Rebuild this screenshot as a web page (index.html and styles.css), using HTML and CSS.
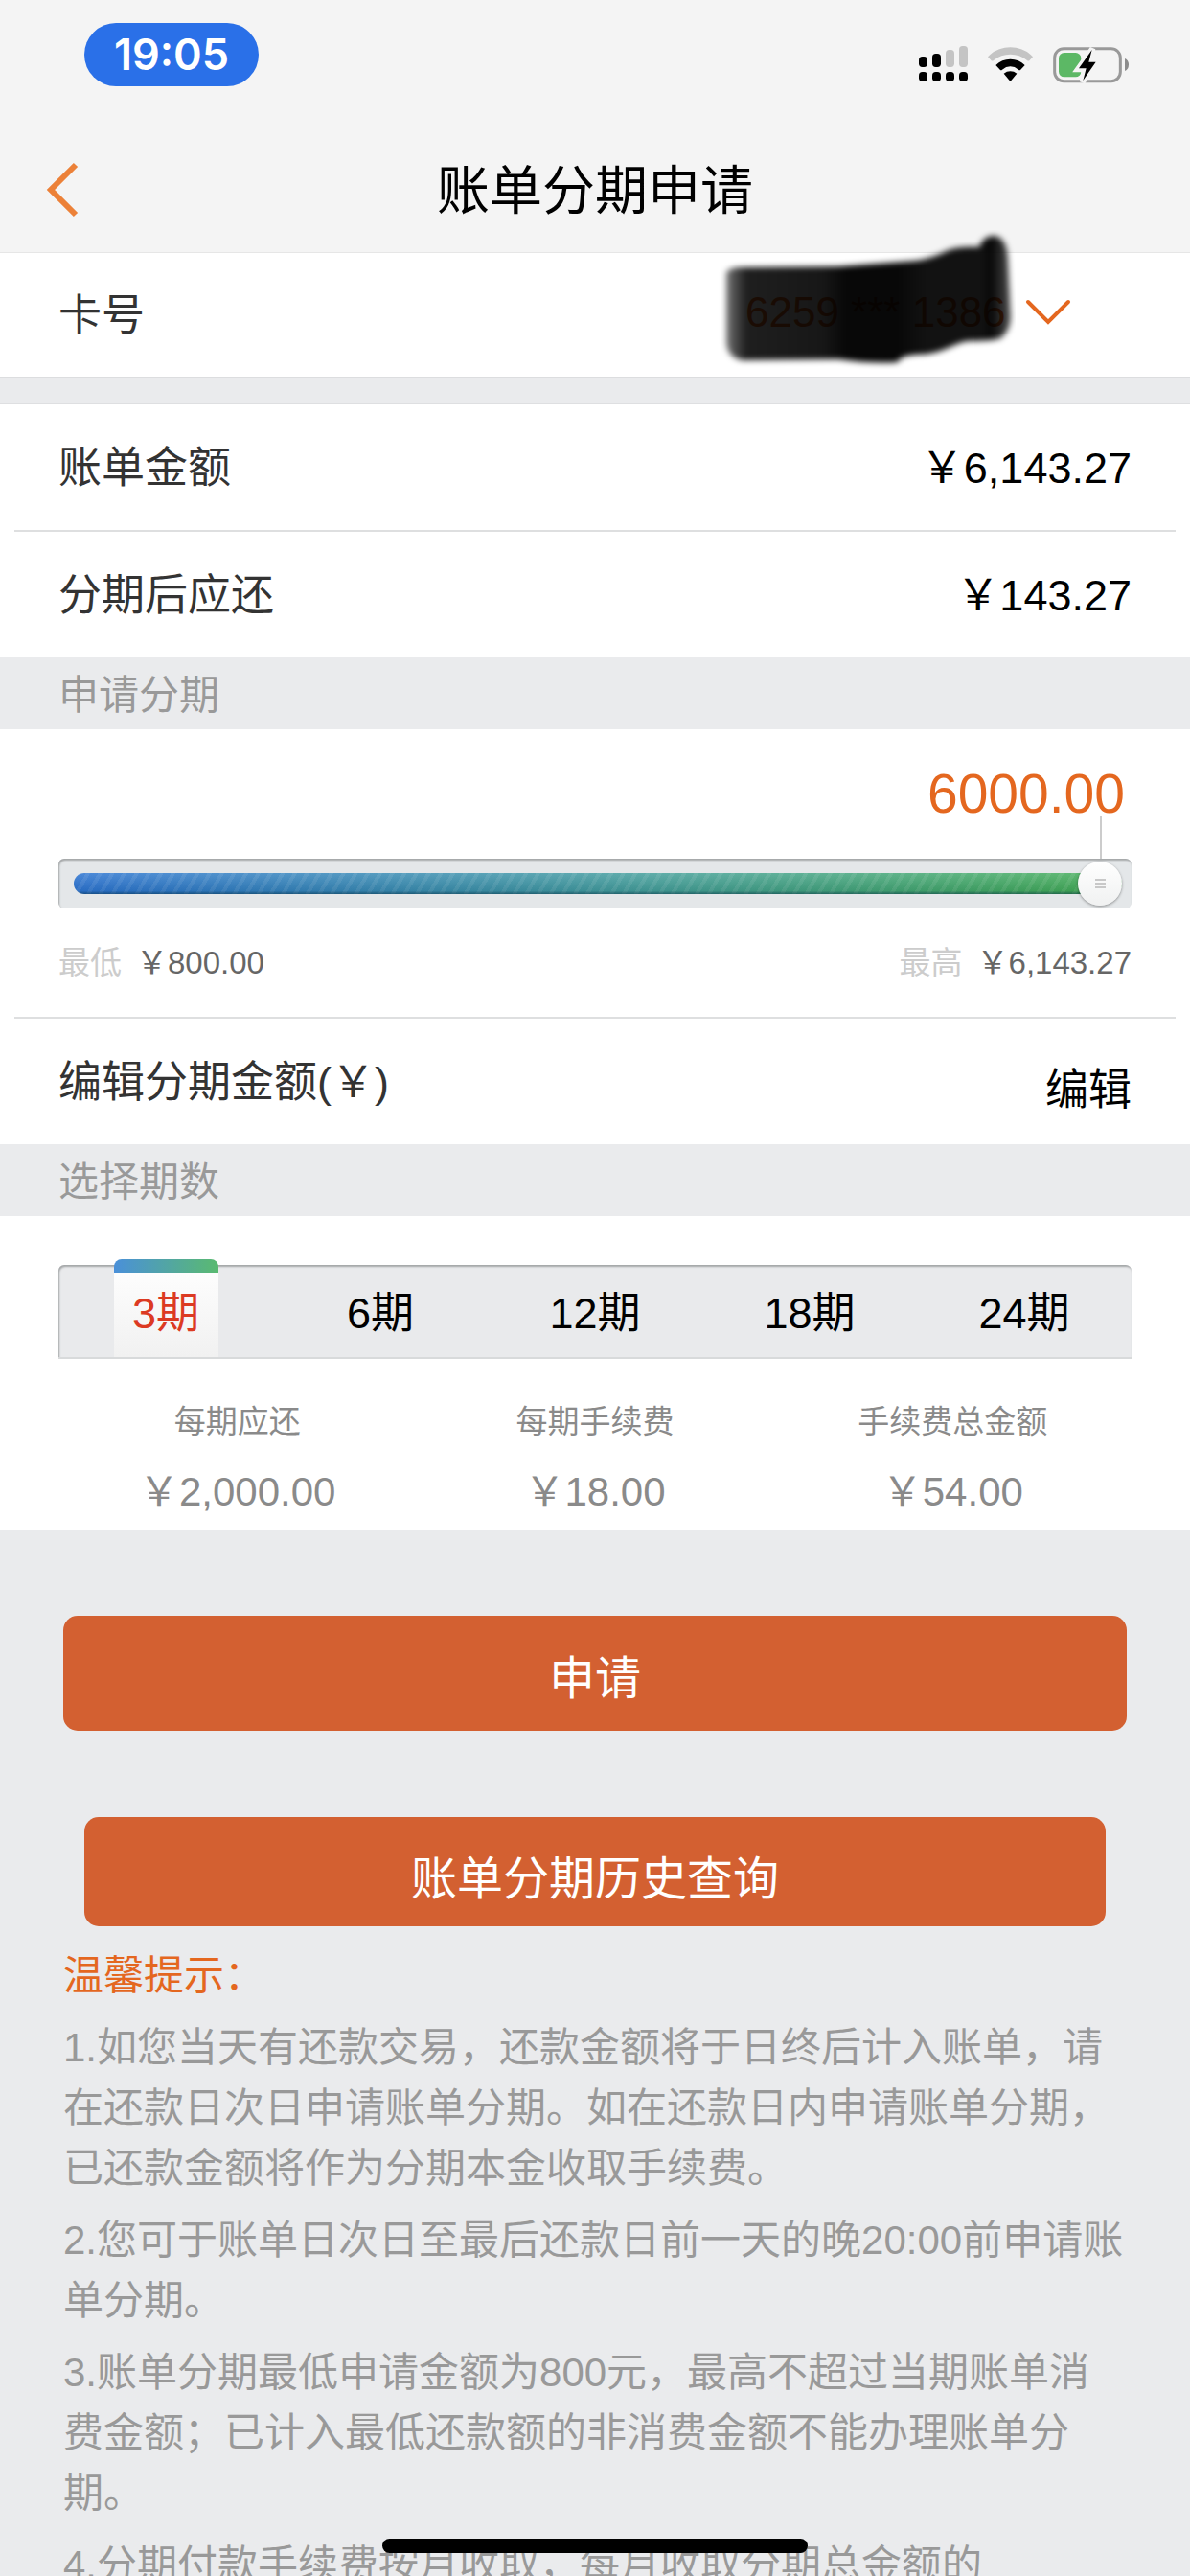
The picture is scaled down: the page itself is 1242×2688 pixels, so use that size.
FILE: index.html
```html
<!DOCTYPE html>
<html lang="zh-CN">
<head>
    <meta charset="UTF-8">
    <meta name="viewport" content="width=device-width, initial-scale=1.0">
    <title>账单分期申请</title>
    <link rel="stylesheet" href="styles.css">
</head>
<body>
    <header class="top">
        <div class="status-bar">
            <span class="time">19:05</span>
            <div class="status-icons">
                <svg width="51" height="37" viewBox="0 0 153 111" aria-hidden="true">
                    <rect x="0" y="33" width="27" height="33" rx="11"/>
                    <rect x="42" y="24" width="27" height="42" rx="11"/>
                    <rect x="84" y="12" width="27" height="54" rx="11" fill="#c4c4c4"/>
                    <rect x="126" y="0" width="27" height="66" rx="11" fill="#c4c4c4"/>
                    <rect x="0" y="81" width="27" height="30" rx="11"/>
                    <rect x="42" y="81" width="27" height="30" rx="11"/>
                    <rect x="84" y="81" width="27" height="30" rx="11"/>
                    <rect x="126" y="81" width="27" height="30" rx="11"/>
                </svg>
                <svg width="47" height="37" viewBox="0 0 141 111" aria-hidden="true">
                    <path d="M0 34Q3 31 7 27Q34 4 70.500 4Q107 4 134 27Q138 31 141 34L130 46Q126 48 123 45Q100 26 70.500 26Q41 26 18 45Q15 48 11 46Z" fill="#c4c4c4"/>
                    <path d="M25 60Q44 41 70.500 41Q97 41 116 60L102 75Q99 77 96 74Q84 64 70.500 64Q57 64 45 74Q42 77 39 75Z"/>
                    <path d="M50 86Q59 79 70.500 79Q82 79 91 86L70.500 111Z"/>
                </svg>
                <svg width="79" height="39" viewBox="0 0 237 117" aria-hidden="true">
                    <rect x="5" y="8" width="206" height="102" rx="29" fill="none" stroke="#999" stroke-width="9"/>
                    <path d="M225 39Q237 44 237 58Q237 73 225 78Z" fill="#8c8c8c"/>
                    <rect x="18" y="21" width="70" height="76" rx="17" fill="#5cb865"/>
                    <path d="M124 8L78 73H100L92 113L138 48H116Z" stroke="#f4f4f4" stroke-width="18"/>
                    <path d="M122 12L81 70H104L94 108L134 50H112Z"/>
                </svg>
            </div>
        </div>
        <div class="nav-bar">
            <button class="back" type="button" aria-label="返回">
                <svg width="34" height="58" viewBox="0 0 34 58" fill="none" stroke="#ec8138" stroke-width="6" aria-hidden="true">
                    <path d="M31 3L5 29L31 55"/>
                </svg>
            </button>
            <h1>账单分期申请</h1>
        </div>
    </header>

    <main class="content">
        <div class="row card-row">
            <label for="card">卡号</label>
            <div class="card-select">
                <select id="card">
                    <option>6259 *** 1386</option>
                </select>
                <svg class="arrow" width="48" height="28" viewBox="0 0 48 28" fill="none" stroke="#e4671f" stroke-width="4" stroke-linecap="round" aria-hidden="true">
                    <path d="M3 3L24 24L45 3"/>
                </svg>
                <!-- marker stroke over the card number -->
                <svg class="marker" width="310" height="150" viewBox="0 0 310 150" aria-hidden="true">
                    <defs>
                        <filter id="soft" x="-10%" y="-10%" width="120%" height="120%">
                            <feGaussianBlur stdDeviation="3"/>
                        </filter>
                        <linearGradient id="ink">
                            <stop offset="0" stop-color="#000" stop-opacity=".55"/>
                            <stop offset=".07" stop-color="#000" stop-opacity=".88"/>
                            <stop offset=".34" stop-color="#000" stop-opacity=".91"/>
                            <stop offset=".42" stop-color="#000" stop-opacity=".97"/>
                            <stop offset=".6" stop-color="#000" stop-opacity=".97"/>
                            <stop offset=".7" stop-color="#000" stop-opacity=".93"/>
                            <stop offset=".9" stop-color="#000" stop-opacity=".93"/>
                            <stop offset=".93" stop-color="#000" stop-opacity=".97"/>
                            <stop offset="1" stop-color="#000" stop-opacity=".7"/>
                        </linearGradient>
                    </defs>
                    <path filter="url(#soft)" fill="url(#ink)" d="M8 44Q12 39 24 39L125 38L205 32Q222 30 240 21Q252 17 272 18Q276 6 288 6Q300 8 302 28L305 92Q304 106 294 113Q286 116 260 116C244 118 235 130 205 130Q190 131 187 138Q160 140 125 135L24 136Q9 132 8 118Z"/>
                </svg>
            </div>
        </div>

        <div class="spacer"></div>

        <div class="row">
            <span>账单金额</span>
            <span class="amount">￥6,143.27</span>
        </div>
        <hr>
        <div class="row">
            <span>分期后应还</span>
            <span class="amount">￥143.27</span>
        </div>

        <h2>申请分期</h2>
        <div class="slider-box">
            <output class="current" for="range">6000.00</output>
            <div class="pointer"></div>
            <input type="range" id="range" min="800" max="6000" value="6000" aria-label="申请分期金额">
            <div class="limits">
                <div class="limit"><span>最低</span>￥800.00</div>
                <div class="limit"><span>最高</span>￥6,143.27</div>
            </div>
        </div>
        <hr>
        <div class="row">
            <span>编辑分期金额(￥)</span>
            <button class="edit" type="button">编辑</button>
        </div>

        <h2>选择期数</h2>
        <div class="periods">
            <div class="tabs">
                <input type="radio" name="period" id="p3" checked><label for="p3">3期</label>
                <input type="radio" name="period" id="p6"><label for="p6">6期</label>
                <input type="radio" name="period" id="p12"><label for="p12">12期</label>
                <input type="radio" name="period" id="p18"><label for="p18">18期</label>
                <input type="radio" name="period" id="p24"><label for="p24">24期</label>
            </div>
            <dl class="fees">
                <div><dt>每期应还</dt><dd>￥2,000.00</dd></div>
                <div><dt>每期手续费</dt><dd>￥18.00</dd></div>
                <div><dt>手续费总金额</dt><dd>￥54.00</dd></div>
            </dl>
        </div>

        <div class="actions">
            <button class="btn" type="button">申请</button>
            <button class="btn history" type="button">账单分期历史查询</button>
        </div>

        <div class="tips">
            <h3>温馨提示：</h3>
            <p>1.如您当天有还款交易，还款金额将于日终后计入账单，请在还款日次日申请账单分期。如在还款日内申请账单分期，已还款金额将作为分期本金收取手续费。</p>
            <p>2.您可于账单日次日至最后还款日前一天的晚20:00前申请账单分期。</p>
            <p>3.账单分期最低申请金额为800元，最高不超过当期账单消费金额；已计入最低还款额的非消费金额不能办理账单分期。</p>
            <p>4.分期付款手续费按月收取，每月收取分期总金额的</p>
        </div>
    </main>
    <div class="home-bar"></div>
</body>
</html>
```
FILE: styles.css
```css
* {
    box-sizing: border-box;
}
body {
    margin: 0;
    height: 100vh;
    overflow: hidden;
    background-color: #eaebed;
    color: #000;
    font-family: "Liberation Sans", "Noto Sans CJK SC", sans-serif;
    font-size: 45px;
}
button,
select {
    font: inherit;
    border: none;
    background: none;
    cursor: pointer;
}
svg {
    display: block;
}

/* Header */
.top {
    background-color: #f4f4f4;
    border-bottom: 1px solid #e6e6e6;
}
.status-bar {
    display: flex;
    justify-content: space-between;
    align-items: flex-start;
    height: 132px;
    padding: 24px 64px 0 88px;
}
.time {
    width: 182px;
    border-radius: 33px;
    background-color: #2a70e8;
    color: #fff;
    font-family: Inter, sans-serif;
    font-size: 45px;
    font-weight: 600;
    line-height: 66px;
    text-align: center;
}
.status-icons {
    display: flex;
    gap: 21px;
    padding-top: 24px;
}
.nav-bar {
    display: grid;
    grid-template-columns: 1fr auto 1fr;
    align-items: center;
    height: 131px;
    padding: 0 48px;
}
.nav-bar h1 {
    margin: 0;
    padding-bottom: 8px;
    font-size: 55px;
    font-weight: normal;
}
.back {
    justify-self: start;
    padding: 0;
}

/* Rows */
.row {
    display: flex;
    justify-content: space-between;
    align-items: center;
    height: 131px;
    padding: 0 61px 6px;
    background-color: #fff;
    color: #333;
}
.amount,
.edit {
    color: #000;
}
.edit {
    padding: 16px 0 0;
}
.card-row {
    height: 129px;
    padding-right: 122px;
}
.card-select {
    position: relative;
}
.card-select select {
    appearance: none;
    padding: 0 70px 0 0;
    color: #e4671f;
    font-size: 44px;
}
.arrow {
    position: absolute;
    top: 12px;
    right: 2px;
    pointer-events: none;
}
.marker {
    position: absolute;
    top: -60px;
    right: 60px;
    pointer-events: none;
}
.spacer {
    height: 29px;
    border-top: 1px solid #dcdddf;
    border-bottom: 2px solid #dedfe1;
}
hr {
    height: 2px;
    margin: 0;
    border: solid #fff;
    border-width: 0 15px;
    background-color: #dedfe0;
}
h2 {
    margin: 0;
    padding: 4px 61px 0;
    color: #999;
    font-size: 42px;
    font-weight: normal;
    line-height: 71px;
}

/* Amount slider */
.slider-box {
    display: flex;
    flex-direction: column;
    padding: 44px 61px 36px;
    background-color: #fff;
}
.current {
    align-self: flex-end;
    padding-right: 7px;
    color: #e4671f;
    font-size: 57px;
    line-height: 46px;
}
.pointer {
    align-self: flex-end;
    width: 2px;
    height: 45px;
    margin-right: 31px;
    background-color: #ccc;
}
input[type="range"] {
    appearance: none;
    width: 100%;
    height: 52px;
    margin: 0;
    padding: 0 10px 0 16px;
    border-radius: 6px;
    background-color: #e4e7e9;
    box-shadow: inset 1px 2px 2px #a4a7a8;
}
input[type="range"]::-webkit-slider-runnable-track {
    height: 22px;
    border-radius: 11px;
    background-image:
        linear-gradient(rgba(255, 255, 255, 0.15), rgba(0, 0, 0, 0.08) 85%, rgba(0, 40, 60, 0.5)),
        repeating-linear-gradient(120deg, rgba(255, 255, 255, 0.08) 0 4px, transparent 4px 11px),
        linear-gradient(90deg, #2c74d2, #449f9b 55%, #43ad54);
}
input[type="range"]::-webkit-slider-thumb {
    appearance: none;
    width: 46px;
    height: 46px;
    margin-top: -12px;
    border-radius: 50%;
    background:
        repeating-linear-gradient(#c8c8c8 0 2px, transparent 2px 4px) center / 11px 10px no-repeat,
        linear-gradient(#fff, #f0f1f1);
    box-shadow: 0 1px 3px rgba(0, 0, 0, 0.4);
}
.limits {
    display: flex;
    justify-content: space-between;
    margin-top: 37px;
    color: #666;
    font-size: 33px;
    line-height: 40px;
}
.limit {
    display: flex;
    gap: 15px;
}
.limit span {
    color: #ccc;
}

/* Periods */
.periods {
    padding: 51px 61px 14px;
    background-color: #fff;
}
.tabs {
    display: grid;
    grid-template-columns: repeat(5, 1fr);
    justify-items: center;
    height: 98px;
    border-radius: 6px 6px 0 0;
    border-bottom: 2px solid #d8dadb;
    background-color: #e9eaec;
    box-shadow: inset 1px 2px 2px #a4a7a8;
}
.tabs input {
    position: absolute;
    opacity: 0;
}
.tabs label {
    width: 109px;
    padding-top: 6px;
    line-height: 90px;
    text-align: center;
    white-space: nowrap;
}
.tabs input:checked + label {
    margin-top: -6px;
    padding-top: 12px;
    border-radius: 8px 8px 0 0;
    background:
        linear-gradient(90deg, #4a90d9, #5aba70) top / 100% 14px no-repeat,
        linear-gradient(#fff, #f1f1f1);
    color: #dc3a22;
}
.fees {
    display: grid;
    grid-template-columns: repeat(3, 1fr);
    margin: 46px 0 0;
    color: #8a8a8a;
    text-align: center;
}
.fees dt {
    font-size: 33px;
    line-height: 40px;
}
.fees dd {
    margin: 28px 0 0;
    font-size: 42px;
    line-height: 50px;
}

/* Buttons */
.actions {
    display: flex;
    flex-direction: column;
    gap: 90px;
    padding: 90px 66px 0;
}
.btn {
    height: 120px;
    padding: 2px 0 0;
    border-radius: 15px;
    background-color: #d36031;
    color: #fff;
    font-size: 48px;
}
.history {
    height: 114px;
    margin: 0 22px;
    padding-top: 6px;
}

/* Tips */
.tips {
    padding: 20px 66px 0;
    color: #999;
    font-size: 42px;
    line-height: 63px;
}
.tips h3 {
    margin: 0;
    color: #e4671f;
    font-size: 42px;
    font-weight: normal;
}
.tips p {
    margin: 12px 0 0;
}

.home-bar {
    position: fixed;
    bottom: 24px;
    left: 50%;
    width: 444px;
    height: 15px;
    margin-left: -222px;
    border-radius: 8px;
    background-color: #000;
}
```
